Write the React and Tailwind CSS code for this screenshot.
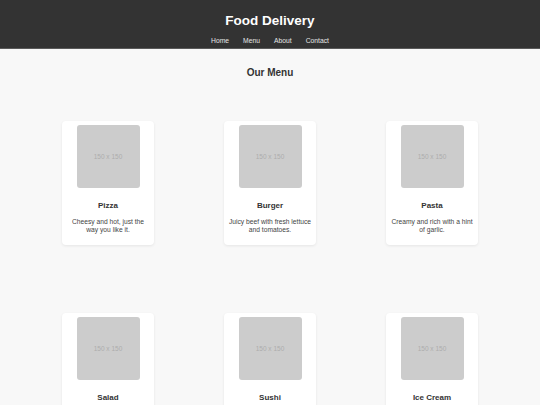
const items = [
  { name: "Pizza", desc: "Cheesy and hot, just the way you like it." },
  { name: "Burger", desc: "Juicy beef with fresh lettuce and tomatoes." },
  { name: "Pasta", desc: "Creamy and rich with a hint of garlic." },
  { name: "Salad", desc: "Fresh greens with a light vinaigrette." },
  { name: "Sushi", desc: "Delicate rolls with fresh fish and rice." },
  { name: "Ice Cream", desc: "Sweet and cold, perfect for dessert." },
];

function MenuCard({ item }) {
  return (
    <div className="w-[92px] bg-white rounded-[4px] shadow-[0_1px_3px_rgba(0,0,0,0.08)] pt-[4px] pb-[11px] px-[4px] text-center">
      <div className="mx-auto w-[63px] h-[63px] rounded-[3px] bg-[#cccccc] flex items-center justify-center text-[#adadad] text-[6.5px]">
        150 x 150
      </div>
      <h3 className="mt-[13px] text-[8px] leading-[10px] font-bold text-[#333]">
        {item.name}
      </h3>
      <p className="mt-[7px] text-[6.7px] leading-[8px] text-[#444]">{item.desc}</p>
    </div>
  );
}

export default function App() {
  return (
    <div className="min-h-screen bg-[#f8f8f8] font-['Liberation_Sans',Arial,sans-serif]">
      <header className="bg-[#333] h-[49px] border-b border-[#5a5a5a] text-center">
        <h1 className="pt-[13px] text-[13.5px] leading-[16px] font-bold text-white">
          Food Delivery
        </h1>
        <nav className="mt-[8px] flex justify-center gap-[14px] text-[6.75px] leading-[8px] text-[#e5e5e5]">
          <a href="#">Home</a>
          <a href="#">Menu</a>
          <a href="#">About</a>
          <a href="#">Contact</a>
        </nav>
      </header>

      <main className="px-[27px]">
        <h2 className="pt-[17px] text-[10px] leading-[14px] font-bold text-center text-[#333]">
          Our Menu
        </h2>
        <div className="mt-[7px] grid grid-cols-3">
          {items.map((item) => (
            <div key={item.name} className="h-[192px] flex items-center justify-center">
              <MenuCard item={item} />
            </div>
          ))}
        </div>
      </main>
    </div>
  );
}
